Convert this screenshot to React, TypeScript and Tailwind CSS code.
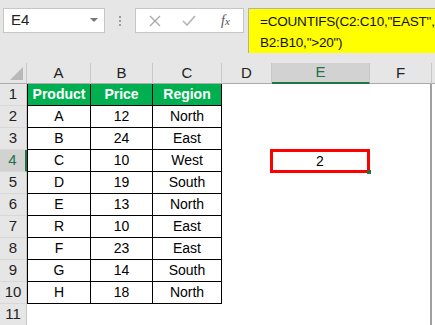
import React from "react";

const cols = [
  { key: "A", w: "w-[64px]" },
  { key: "B", w: "w-[62px]" },
  { key: "C", w: "w-[69px]" },
  { key: "D", w: "w-[50px]" },
  { key: "E", w: "w-[98px]" },
  { key: "F", w: "w-[62px]" },
];

const data = [
  ["A", "12", "North"],
  ["B", "24", "East"],
  ["C", "10", "West"],
  ["D", "19", "South"],
  ["E", "13", "North"],
  ["R", "10", "East"],
  ["F", "23", "East"],
  ["G", "14", "South"],
  ["H", "18", "North"],
];

function RowHead({ n, active }: { n: number; active?: boolean }) {
  return (
    <div
      className={`w-[27px] h-full shrink-0 flex items-center justify-center border-b border-[#d8d8d8] text-[15px] ${
        active
          ? "bg-[#d2d2d2] text-[#217346] border-r-2 border-r-[#217346]"
          : "bg-[#e6e6e6] text-[#222] border-r border-r-[#c8c8c8]"
      }`}
    >
      {n}
    </div>
  );
}

export default function App() {
  return (
    <div
      className="w-[435px] h-[325px] overflow-hidden bg-white text-black"
      style={{ fontFamily: '"Liberation Sans", Arial, sans-serif' }}
    >
      {/* Formula bar */}
      <div className="h-[63px] bg-[#e6e6e6] flex items-start pt-[8px]">
        <div className="ml-[3px] w-[102px] h-[25px] bg-white border border-[#c6c6c6] flex items-center pl-[7px] pr-[6px] text-[15px] text-[#222]">
          <span className="flex-1">E4</span>
          <svg width="8" height="5" viewBox="0 0 8 5">
            <path d="M0 0h8L4 4z" fill="#777" />
          </svg>
        </div>
        <div className="w-[30px] h-[25px] flex flex-col items-center justify-center gap-[2px]">
          <span className="w-[2px] h-[2px] bg-[#9a9a9a]" />
          <span className="w-[2px] h-[2px] bg-[#9a9a9a]" />
          <span className="w-[2px] h-[2px] bg-[#9a9a9a]" />
        </div>
        <div className="w-[109px] h-[25px] bg-white border border-[#c6c6c6] flex items-center pl-[13px] gap-[21px]">
          <svg width="12" height="12" viewBox="0 0 12 12">
            <path d="M1 1l10 10M11 1L1 11" stroke="#aaa" strokeWidth="1.4" />
          </svg>
          <svg width="14" height="11" viewBox="0 0 14 11">
            <path d="M1 6l4 4 8-9" stroke="#b4b4b4" strokeWidth="1.6" fill="none" />
          </svg>
          <span
            className="ml-[4px] text-[14px] italic text-[#555]"
            style={{ fontFamily: '"Liberation Serif", serif' }}
          >
            f<span className="text-[11px]">x</span>
          </span>
        </div>
        <div className="ml-[4px] flex-1 h-[45px] bg-[#ffff00] border-l border-t border-[#b0b0b0] pl-[11px] pt-[2px] text-[13.5px] leading-[21px] text-[#111] tracking-[-0.2px]">
          <div>=COUNTIFS(C2:C10,"EAST",</div>
          <div>B2:B10,"&gt;20")</div>
        </div>
      </div>

      {/* Column headers */}
      <div className="h-[21px] flex bg-[#e6e6e6]">
        <div className="w-[27px] h-full shrink-0 border-r border-[#c8c8c8] border-b border-b-[#ababab] flex items-end justify-end pr-[3px] pb-[3px]">
          <svg width="13" height="13" viewBox="0 0 13 13">
            <path d="M13 0V13H0z" fill="#b9b9b9" />
          </svg>
        </div>
        {cols.map((c) => (
          <div
            key={c.key}
            className={`${c.w} h-full shrink-0 flex items-center justify-center text-[15px] border-r border-r-[#c8c8c8] ${
              c.key === "E"
                ? "bg-[#d2d2d2] text-[#217346] border-b-2 border-b-[#217346]"
                : "text-[#222] border-b border-b-[#ababab]"
            }`}
          >
            {c.key}
          </div>
        ))}
        <div className="flex-1 border-b border-[#ababab]" />
      </div>

      {/* Row 1: headers */}
      <div className="h-[22px] flex">
        <RowHead n={1} />
        {["Product", "Price", "Region"].map((t, i) => (
          <div
            key={t}
            className={`${cols[i].w} h-full shrink-0 bg-[#00b050] text-white font-bold text-[14px] flex items-center justify-center border-r border-b border-black ${
              i === 0 ? "border-l" : ""
            }`}
          >
            {t}
          </div>
        ))}
        <div className="w-[50px] shrink-0" />
        <div className="w-[98px] shrink-0" />
        <div className="w-[62px] shrink-0 border-r-2 border-[#a0a0a0]" />
      </div>

      {data.map((row, r) => (
        <div key={r} className="h-[22px] flex">
          <RowHead n={r + 2} active={r + 2 === 4} />
          {row.map((t, i) => (
            <div
              key={i}
              className={`${cols[i].w} h-full shrink-0 text-[14px] flex items-center justify-center border-r border-b border-black ${
                i === 0 ? "border-l" : ""
              }`}
            >
              {t}
            </div>
          ))}
          <div className="w-[50px] shrink-0" />
          <div className="w-[98px] shrink-0 relative">
            {r + 2 === 4 && (
              <div className="absolute left-[-2px] top-[-1px] w-[100px] h-[24px] border-[3px] border-[#ff0000] flex items-center justify-center text-[14px]">
                2
                <span className="absolute right-[-4px] bottom-[-4px] w-[4px] h-[4px] bg-[#217346]" />
              </div>
            )}
          </div>
          <div className="w-[62px] shrink-0 border-r-2 border-[#a0a0a0]" />
        </div>
      ))}

      <div className="h-[22px] flex">
        <RowHead n={11} />
        <div className="w-[405px] shrink-0 border-r-2 border-[#a0a0a0]" />
      </div>
    </div>
  );
}
